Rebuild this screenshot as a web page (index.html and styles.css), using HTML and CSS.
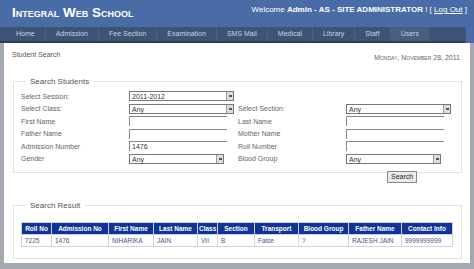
FILE: index.html
```html
<!DOCTYPE html>
<html lang="en">
<head>
    <meta charset="UTF-8">
    <title>Student Search</title>
    <link rel="stylesheet" href="styles.css">
</head>
<body>
    <!-- Header -->
    <div class="header">
        <div class="title">Integral Web School</div>
        <div class="welcome">Welcome <b>Admin - AS - SITE ADMINISTRATOR</b> ! [ <a href="#">Log Out</a> ]</div>
    </div>
    <div class="nav">
        <a href="#">Home</a>
        <a href="#">Admission</a>
        <a href="#">Fee Section</a>
        <a href="#">Examination</a>
        <a href="#">SMS Mail</a>
        <a href="#">Medical</a>
        <a href="#">Library</a>
        <a href="#">Staff</a>
        <a href="#" class="active">Users</a>
    </div>

    <div class="main">
        <div class="crumb-row">
            <span class="crumb">Student Search</span>
            <span class="date">Monday, November 28, 2011</span>
        </div>

        <!-- Search form -->
        <fieldset class="box">
            <legend>Search Students</legend>
            <div class="form-grid">
                <label>Select Session:</label>
                <div class="sel w105">2011-2012</div>
                <span></span><span></span>

                <label>Select Class:</label>
                <div class="sel w105">Any</div>
                <label>Select Section:</label>
                <div class="sel w105">Any</div>

                <label>First Name</label>
                <div class="txt"></div>
                <label>Last Name</label>
                <div class="txt"></div>

                <label>Father Name</label>
                <div class="txt"></div>
                <label>Mother Name</label>
                <div class="txt"></div>

                <label>Admission Number</label>
                <div class="txt">1476</div>
                <label>Roll Number</label>
                <div class="txt"></div>

                <label>Gender</label>
                <div class="sel w95">Any</div>
                <label>Blood Group</label>
                <div class="sel w95">Any</div>
            </div>
            <div class="btn-row">
                <button class="button">Search</button>
            </div>
        </fieldset>

        <!-- Results -->
        <fieldset class="box result">
            <legend>Search Result</legend>
            <table class="grid">
                <colgroup>
                    <col class="c30"><col class="c57"><col class="c45"><col class="c44"><col class="c20">
                    <col class="c37"><col class="c44"><col class="c50"><col class="c53"><col>
                </colgroup>
                <tr>
                    <th>Roll No</th>
                    <th>Admission No</th>
                    <th>First Name</th>
                    <th>Last Name</th>
                    <th>Class</th>
                    <th>Section</th>
                    <th>Transport</th>
                    <th>Blood Group</th>
                    <th>Father Name</th>
                    <th>Contact Info</th>
                </tr>
                <tr>
                    <td>7225</td>
                    <td>1476</td>
                    <td>NIHARIKA</td>
                    <td>JAIN</td>
                    <td>VII</td>
                    <td>B</td>
                    <td>False</td>
                    <td>?</td>
                    <td>RAJESH JAIN</td>
                    <td>9999999999</td>
                </tr>
            </table>
        </fieldset>
    </div>
</body>
</html>
```

FILE: styles.css
```css
body {
    margin: 0;
    font-family: "Liberation Sans", Arial, sans-serif;
    background-color: #a4a9b1;
    height: 269px;
    overflow: hidden;
}
.header {
    background-color: #4a6ca6;
    height: 27px;
    display: flex;
    justify-content: space-between;
    align-items: flex-start;
    color: white;
}
.title {
    font-size: 13.5px;
    font-weight: bold;
    font-variant: small-caps;
    padding: 5px 0 0 12px;
}
.welcome {
    font-size: 8px;
    padding: 5px 7px 0 0;
}
.welcome a {
    color: white;
}
.nav {
    background-color: #3c5476;
    border-bottom: 2px solid #2c3e58;
    height: 14px;
    padding-left: 6px;
    display: flex;
    margin-right: 8px;
    box-shadow: 8px 0 0 #4a6ca6;
}
.nav a {
    color: #c9d2de;
    text-decoration: none;
    font-size: 7px;
    line-height: 14px;
    padding: 0 10px;
    border-right: 1px solid #4a6184;
}
.nav a.active {
    background-color: #45607f;
    border-right: none;
}
.main {
    background-color: white;
    margin: 0 4px;
    height: 220px;
    padding: 0 8px 0 9px;
}
.crumb-row {
    display: flex;
    justify-content: space-between;
    padding: 8px 0 0 0;
    height: 26px;
    font-size: 7px;
    color: #555;
}
.crumb {
    margin-left: -1px;
}
.date {
    font-variant: small-caps;
    color: #666;
    padding-top: 3px;
    padding-right: 2px;
}
.box {
    border: 1px solid #e2e2e2;
    margin: 0;
    padding: 4px 9px 6px 7px;
    height: 96px;
    box-sizing: border-box;
}
.box legend {
    font-size: 8px;
    color: #555;
    padding: 0 4px;
    margin-left: 5px;
}
.form-grid {
    display: grid;
    grid-template-columns: 108px 109px 108px 1fr;
    grid-auto-rows: 12.5px;
    align-items: center;
    font-size: 7px;
    color: #666;
}
.sel, .txt {
    font-size: 7px;
    line-height: 9px;
    color: #333;
    padding-left: 2px;
    box-sizing: border-box;
    height: 10px;
}
.sel {
    border: 1px solid #777;
    border-right: none;
    position: relative;
    background: white;
}
.sel::after {
    content: "";
    position: absolute;
    right: 0;
    top: 0;
    width: 6px;
    height: 8px;
    background: #ddd linear-gradient(#555, #555) center / 3px 2px no-repeat;
    border-left: 1px solid #999;
    border-right: 1px solid #777;
}
.w105 { width: 105px; }
.w95 { width: 95px; }
.txt {
    width: 98px;
    border-top: 1px solid #888;
    border-left: 1px solid #888;
}
.btn-row {
    padding-left: 366px;
}
.button {
    font-family: "Liberation Sans", Arial, sans-serif;
    font-size: 7px;
    padding: 1px 3px;
    height: 12px;
    background-color: #ecebe6;
    border: 1px solid #888;
    color: #222;
}
.result {
    margin-top: 28px;
    height: 58px;
    padding: 12px 8px 0 7px;
}
.grid {
    border-collapse: collapse;
    table-layout: fixed;
    width: 432px;
    font-size: 6.5px;
    white-space: nowrap;
}
.c30 { width: 30px; }
.c57 { width: 57px; }
.c45 { width: 45px; }
.c44 { width: 44px; }
.c20 { width: 20px; }
.c37 { width: 37px; }
.c50 { width: 50px; }
.c53 { width: 53px; }
.grid th {
    background-color: #0f3396;
    color: white;
    height: 11px;
    padding: 0 1px;
    border: 1px solid #c8cfe0;
    text-align: center;
    font-weight: bold;
    overflow: hidden;
}
.grid td {
    color: #4a5580;
    height: 11px;
    padding: 0 3px;
    border: 1px solid #d4d4d4;
    overflow: hidden;
}
```
